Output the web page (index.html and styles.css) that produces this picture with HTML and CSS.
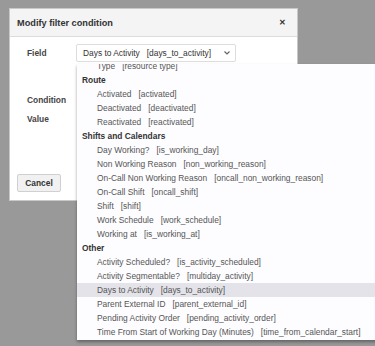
FILE: index.html
```html
<!DOCTYPE html>
<html lang="en">
<head>
    <meta charset="UTF-8">
    <title>Modify filter condition</title>
    <link rel="stylesheet" href="styles.css">
</head>
<body>
    <div class="dialog">
        <header class="dialog-header">
            <h1>Modify filter condition</h1>
            <span class="close">&#x2715;</span>
        </header>
        <div class="dialog-body">
            <div class="row row-field">
                <label>Field</label>
                <div class="select">
                    <span>Days to Activity<span class="key">[days_to_activity]</span></span>
                    <svg class="chevron" width="8" height="6" viewBox="0 0 8 6"><path d="M1.5 1.5 L4 4 L6.5 1.5" fill="none" stroke="#666" stroke-width="1.2"/></svg>
                </div>
            </div>
            <div class="row row-condition"><label>Condition</label></div>
            <div class="row row-value"><label>Value</label></div>
        </div>
        <footer class="dialog-footer">
            <button class="btn">Cancel</button>
        </footer>
    </div>

    <!-- opened select list -->
    <div class="dropdown">
        <ul class="options">
            <li class="item">Type<span class="key">[resource type]</span></li>
            <li class="group">Route</li>
            <li class="item">Activated<span class="key">[activated]</span></li>
            <li class="item">Deactivated<span class="key">[deactivated]</span></li>
            <li class="item">Reactivated<span class="key">[reactivated]</span></li>
            <li class="group">Shifts and Calendars</li>
            <li class="item">Day Working?<span class="key">[is_working_day]</span></li>
            <li class="item">Non Working Reason<span class="key">[non_working_reason]</span></li>
            <li class="item">On-Call Non Working Reason<span class="key">[oncall_non_working_reason]</span></li>
            <li class="item">On-Call Shift<span class="key">[oncall_shift]</span></li>
            <li class="item">Shift<span class="key">[shift]</span></li>
            <li class="item">Work Schedule<span class="key">[work_schedule]</span></li>
            <li class="item">Working at<span class="key">[is_working_at]</span></li>
            <li class="group">Other</li>
            <li class="item">Activity Scheduled?<span class="key">[is_activity_scheduled]</span></li>
            <li class="item">Activity Segmentable?<span class="key">[multiday_activity]</span></li>
            <li class="item selected">Days to Activity<span class="key">[days_to_activity]</span></li>
            <li class="item">Parent External ID<span class="key">[parent_external_id]</span></li>
            <li class="item">Pending Activity Order<span class="key">[pending_activity_order]</span></li>
            <li class="item">Time From Start of Working Day (Minutes)<span class="key">[time_from_calendar_start]</span></li>
        </ul>
    </div>
</body>
</html>
```

FILE: styles.css
```css
/* General */
body {
    font-family: 'Liberation Sans', Arial, sans-serif;
    font-size: 8.4px;
    margin: 0;
    padding: 8px 0 0 9px;
    background-color: #999999;
    height: 346px;
    box-sizing: border-box;
    overflow: hidden;
}

/* Dialog */
.dialog {
    width: 289px;
    background-color: #ffffff;
    border: 1px solid #c8c8c8;
    box-sizing: border-box;
}

.dialog-header {
    display: flex;
    align-items: center;
    justify-content: space-between;
    height: 28px;
    padding: 0 11px 0 7px;
    background-color: #f4f4f4;
    border-bottom: 1px solid #dcdcdc;
    box-sizing: border-box;
}

.dialog-header h1 {
    font-size: 9.2px;
    font-weight: bold;
    color: #333333;
    margin: 0;
}

.close {
    font-size: 8px;
    font-weight: bold;
    color: #333333;
}

.dialog-body {
    padding: 7px 0 0 17px;
}

.row {
    display: flex;
    align-items: center;
}

.row label {
    width: 49px;
    font-weight: bold;
    color: #444444;
}

.row-field {
    height: 18px;
}

.row-condition {
    margin-top: 29px;
    height: 18px;
}

.row-value {
    height: 18px;
    margin-top: 1px;
}

.select {
    display: flex;
    align-items: center;
    justify-content: space-between;
    width: 160px;
    height: 18px;
    padding: 0 4px 0 6px;
    border: 1px solid #dddddd;
    border-radius: 2px;
    box-sizing: border-box;
    color: #333333;
}

.chevron {
    display: block;
}

.key {
    margin-left: 7px;
}

.dialog-footer {
    display: flex;
    padding: 46px 0 8px 7px;
}

.btn {
    font-family: inherit;
    font-size: 8.4px;
    font-weight: bold;
    color: #333333;
    width: 44px;
    height: 18px;
    padding: 0;
    background-color: #f1f1f1;
    border: 1px solid #d0d0d0;
    border-radius: 2px;
}

/* Open list */
.dropdown {
    position: absolute;
    left: 77px;
    top: 64px;
    width: 310px;
    height: 276px;
    overflow: hidden;
    background-color: #fdfdff;
    box-shadow: 0 2px 3px rgba(0, 0, 0, 0.35);
}

.options {
    list-style: none;
    margin: -5px 0 0 0;
    padding: 0;
}

.options li {
    height: 14px;
    line-height: 14px;
    white-space: nowrap;
}

.group {
    padding-left: 5px;
    font-weight: bold;
    color: #333333;
}

.item {
    padding-left: 20px;
    color: #555555;
}

.selected {
    background-color: #e3e3e9;
}
```
